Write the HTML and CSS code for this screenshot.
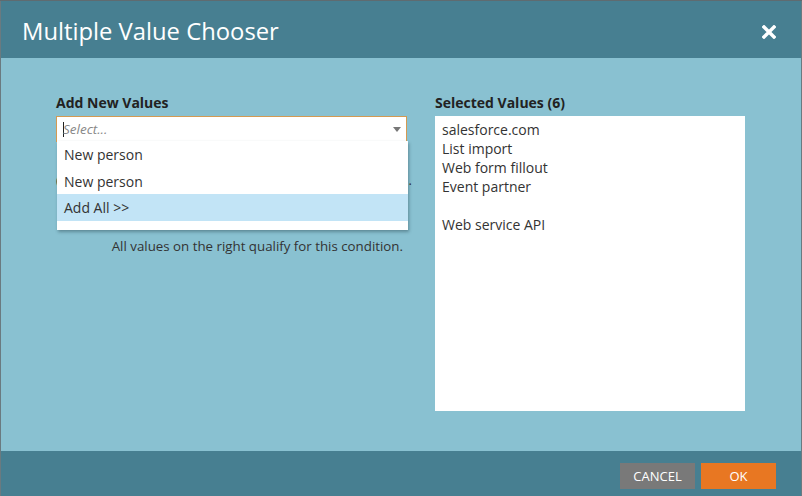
FILE: index.html
```html
<!DOCTYPE html>
<html>
<head>
<meta charset="utf-8">
<link rel="stylesheet" href="styles.css">
</head>
<body>
<div class="dialog">
  <div class="header">
    <div class="title">Multiple Value Chooser</div>
    <div class="close">
      <svg width="14" height="14" viewBox="0 0 14 14"><path d="M2 2 L12 12 M12 2 L2 12" stroke="#fff" stroke-width="3.4" stroke-linecap="square"/></svg>
    </div>
  </div>
  <div class="content">
    <div class="col left">
      <div class="label">Add New Values</div>
      <div class="combo">
        <div class="select"><span class="caret"></span><span class="ph">Select...</span><span class="arrow"></span></div>
        <div class="hidden-line"><span class="paren">(</span><span class="dot">.</span></div>
        <div class="menu">
          <div class="item">New person</div>
          <div class="item">New person</div>
          <div class="item active">Add All &gt;&gt;</div>
          <div class="menu-pad"></div>
        </div>
      </div>
      <div class="hint">All values on the right qualify for this condition.</div>
    </div>
    <div class="col right">
      <div class="label">Selected Values (6)</div>
      <div class="listbox">
        <div class="li">salesforce.com</div>
        <div class="li">List import</div>
        <div class="li">Web form fillout</div>
        <div class="li">Event partner</div>
        <div class="li">&nbsp;</div>
        <div class="li">Web service API</div>
      </div>
    </div>
  </div>
  <div class="footer">
    <button class="btn cancel">CANCEL</button>
    <button class="btn ok">OK</button>
  </div>
</div>
</body>
</html>
```
FILE: styles.css
```css
html, body {
  margin: 0;
  padding: 0;
  background: #5f6b70;
}
body {
  font-family: "Open Sans", "Noto Sans", sans-serif;
  width: 802px;
  height: 496px;
  overflow: hidden;
}
.dialog {
  margin-top: 1px;
  width: 800px;
  height: 495px;
  display: flex;
  flex-direction: column;
  border-left: 1px solid #6a7a80;
  border-right: 1px solid #6a7a80;
}
.header {
  height: 57px;
  background: #477f91;
  display: flex;
  align-items: center;
  justify-content: space-between;
  padding: 0 25px 0 21px;
}
.title {
  color: #fff;
  font-size: 23.8px;
  margin-top: 2px;
}
.close {
  display: flex;
  margin-top: 5px;
}
.content {
  flex: 1;
  background: #89c1d1;
  display: flex;
  padding: 36px 0 0 55px;
  gap: 28px;
}
.col.left { width: 351px; }
.col.right { width: 310px; }
.label {
  font-size: 14px;
  font-weight: 700;
  color: #222;
  height: 22px;
  line-height: 18px;
}
.combo {
  position: relative;
  height: 121px;
}
.select {
  height: 24px;
  background: #fff;
  border: 1px solid #d49a52;
  display: flex;
  align-items: center;
  padding-left: 6px;
  position: relative;
}
.caret {
  width: 1px;
  height: 15px;
  background: #222;
}
.ph {
  font-style: italic;
  color: #888;
  font-size: 13.5px;
  margin-left: -1px;
}
.arrow {
  position: absolute;
  right: 5px;
  top: 10px;
  width: 0;
  height: 0;
  border-left: 4px solid transparent;
  border-right: 4px solid transparent;
  border-top: 5px solid #777;
}
.hidden-line {
  display: flex;
  justify-content: space-between;
  font-size: 13px;
  color: #333;
  margin-top: 29px;
  width: 356px;
}
.menu {
  position: absolute;
  left: 1px;
  top: 25px;
  width: 351px;
  background: #fff;
  box-shadow: 1px 2px 3px rgba(40, 70, 80, 0.45);
}
.item {
  height: 26.5px;
  line-height: 27px;
  padding-left: 7px;
  font-size: 14px;
  color: #333;
}
.item.active {
  background: #c2e4f6;
}
.menu-pad { height: 9px; }
.hint {
  text-align: right;
  font-size: 13.3px;
  color: #333;
  padding-right: 4px;
}
.listbox {
  background: #fff;
  height: 285px;
  padding: 4px 7px 6px;
}
.li {
  font-size: 14px;
  line-height: 19px;
  color: #333;
}
.footer {
  height: 45px;
  background: #477f91;
  display: flex;
  justify-content: flex-end;
  align-items: center;
  gap: 6px;
  padding: 0 25px 0 0;
}
.btn {
  width: 75px;
  height: 26px;
  border: none;
  font-family: "Open Sans", "Noto Sans", sans-serif;
  font-size: 13px;
  color: #fff;
  margin-top: 4px;
  padding: 0;
}
.btn.cancel { background: #797979; }
.btn.ok { background: #e87722; }
```
